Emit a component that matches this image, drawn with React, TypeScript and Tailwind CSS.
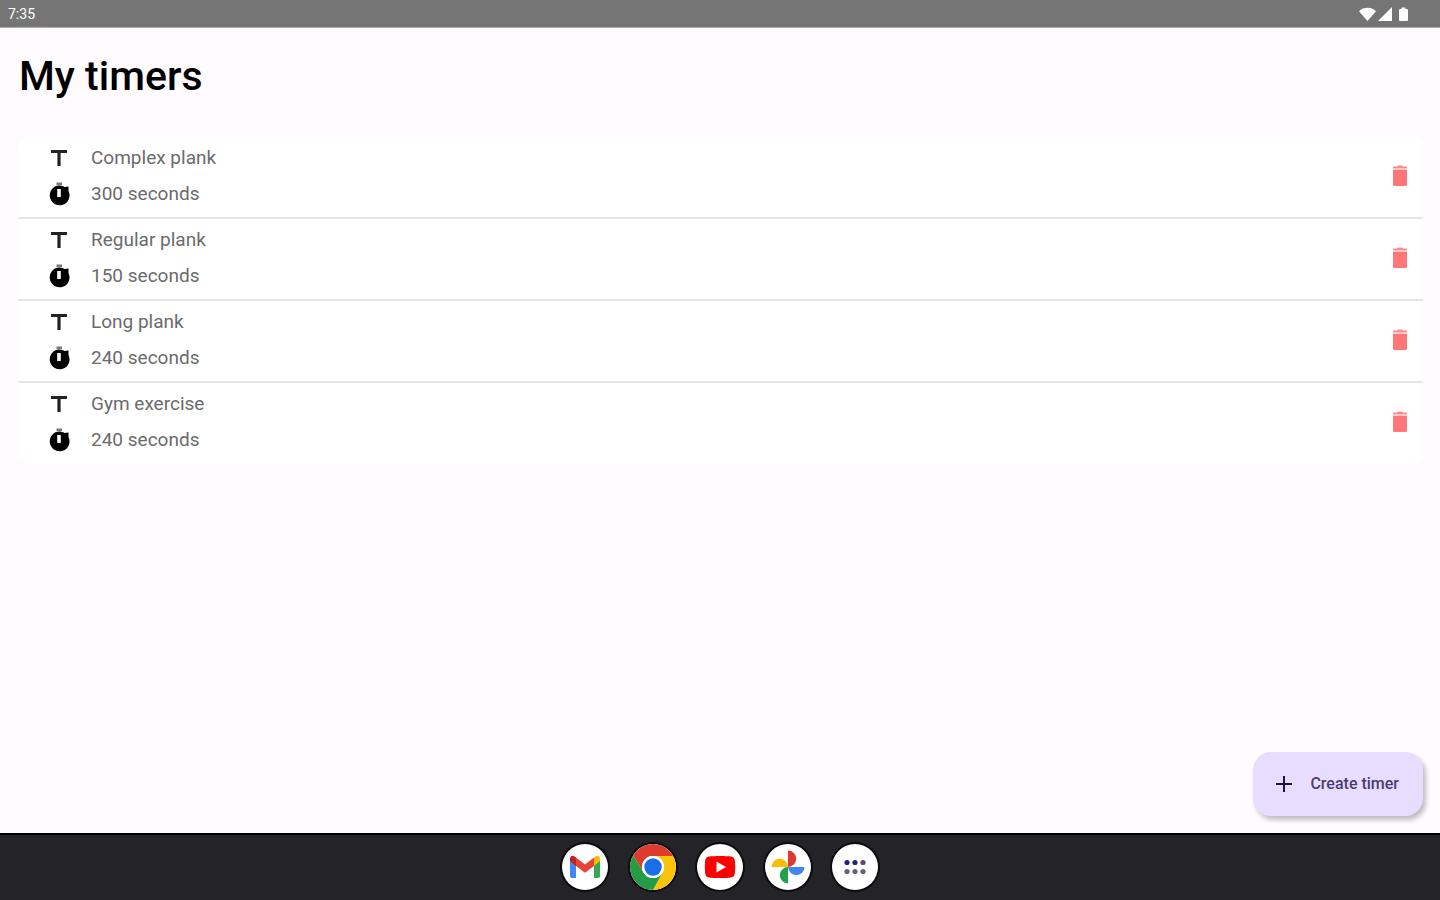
import React, { useState } from "react";

interface Timer {
  id: number;
  name: string;
  seconds: number;
}

const initialTimers: Timer[] = [
  { id: 1, name: "Complex plank", seconds: 300 },
  { id: 2, name: "Regular plank", seconds: 150 },
  { id: 3, name: "Long plank", seconds: 240 },
  { id: 4, name: "Gym exercise", seconds: 240 },
];

function TitleIcon() {
  return (
    <svg viewBox="0 0 24 24" className="size-6 shrink-0" aria-hidden="true">
      <path d="M4 4h16v3h-6.4v13h-3.2V7H4z" fill="#222" />
    </svg>
  );
}

function StopwatchIcon() {
  return (
    <svg viewBox="0 0 24 24" className="size-6 shrink-0" aria-hidden="true">
      <path d="M9.5 0.500h5.500v2.500H9.500z" fill="#777" />
      <path
        fillRule="evenodd"
        d="M12 3.500c2 0 3.900.5 5.500 1.500L21.500 4.500V9A9.900 9.900 0 1 1 12 3.500zM10.200 7v8h3.600V7z"
        fill="#000"
      />
    </svg>
  );
}

function TrashIcon() {
  return (
    <svg viewBox="0 0 16 22" className="h-[22px] w-4" aria-hidden="true">
      <path d="M1 1.500h4l1-1h4l1 1h4v2H1z" fill="#ff8a8a" />
      <path d="M1 3.500h14V5H1z" fill="#ffc9c9" />
      <path d="M1 5h14v14.500a1.500 1.500 0 0 1-1.500 1.500h-11A1.500 1.500 0 0 1 1 19.500z" fill="#ff7679" />
    </svg>
  );
}

function StatusBar() {
  return (
    <header className="flex h-7 items-center justify-between border-b border-[#b0afb0] bg-[#757575] pr-7 pl-2 text-white">
      <span className="text-sm leading-4">7:35</span>
      <svg viewBox="0 0 54 16" className="h-4 w-[54px]" fill="#fff" aria-hidden="true">
        <path d="M1 5.200C5.500 0.600 13.500 0.600 18 5.200L9.500 15z" />
        <path d="M34 1v14H20z" />
        <path d="M43.500 1.500h4V3h1.200c.7 0 1.300.6 1.300 1.300v9.400c0 .7-.6 1.300-1.300 1.300h-6.400c-.7 0-1.300-.6-1.300-1.300V4.300c0-.7.600-1.300 1.300-1.300h1.200z" />
      </svg>
    </header>
  );
}

function GmailIcon() {
  return (
    <svg viewBox="0 0 46 46" className="size-full" aria-hidden="true">
      <path d="M8 15.500l6 4.500v14h-4a2 2 0 0 1-2-2z" fill="#4285f4" />
      <path d="M32 20l6-4.500V32a2 2 0 0 1-2 2h-4z" fill="#34a853" />
      <path d="M32 13.500l1.500-1.100c2-1.400 4.500 0 4.500 2.400V17l-6 5z" fill="#fbbc04" />
      <path d="M14 13.500l-1.500-1.100C10.500 11 8 12.400 8 14.800V17l6 5z" fill="#c5221f" />
      <path d="M14 13.500l9 7 9-7V22l-9 6.800L14 22z" fill="#ea4335" />
    </svg>
  );
}

function ChromeIcon() {
  return (
    <svg viewBox="0 0 46 46" className="size-full" aria-hidden="true">
      <path d="M23 12h20.200A23 23 0 0 0 3.080 11.500L13.470 28.500A11 11 0 0 1 23 12z" fill="#dd3b2c" />
      <path d="M43.200 12H23a11 11 0 0 1 9.530 16.500L23 46A23 23 0 0 0 43.200 12z" fill="#fcc30b" />
      <path d="M3.080 11.500A23 23 0 0 0 23 46l9.530-17.500a11 11 0 0 1-19.060 0z" fill="#259b45" />
      <circle cx="23" cy="23" r="11" fill="#fff" />
      <circle cx="23" cy="23" r="8.700" fill="#1a6fe8" />
    </svg>
  );
}

function YoutubeIcon() {
  return (
    <svg viewBox="0 0 46 46" className="size-full" aria-hidden="true">
      <path
        d="M12 12.500c5-.8 17-.8 22 0 2.500.4 3.500 1.500 3.800 4 .5 4 .5 9 0 13-.3 2.500-1.300 3.600-3.800 4-5 .8-17 .8-22 0-2.500-.4-3.500-1.500-3.800-4-.5-4-.5-9 0-13 .3-2.500 1.300-3.600 3.800-4z"
        fill="#f00"
      />
      <path d="M19.500 17.500v11L29 23z" fill="#fff" />
    </svg>
  );
}

function PhotosIcon() {
  return (
    <svg viewBox="0 0 46 46" className="size-full" aria-hidden="true">
      <path d="M23 6.500a8.200 8.200 0 0 1 0 16.400z" fill="#df3a30" />
      <path d="M39.500 23a8.200 8.200 0 0 1-16.400 0z" fill="#4285f4" />
      <path d="M23 39.500a8.200 8.200 0 0 1 0-16.400z" fill="#1ea446" />
      <path d="M6.500 23a8.200 8.200 0 0 1 16.400 0z" fill="#fbbc04" />
    </svg>
  );
}

function AppsIcon() {
  return (
    <svg viewBox="0 0 46 46" className="size-full" aria-hidden="true">
      <g fill="#26217d">
        <circle cx="15" cy="18.500" r="2.600" />
        <circle cx="23" cy="18.500" r="2.600" />
        <circle cx="31" cy="18.500" r="2.600" fill="#65446f" />
      </g>
      <g fill="#62627a">
        <circle cx="15" cy="27.500" r="2.600" />
        <circle cx="23" cy="27.500" r="2.600" />
        <circle cx="31" cy="27.500" r="2.600" />
      </g>
    </svg>
  );
}

const apps = [
  { label: "Gmail", Icon: GmailIcon },
  { label: "Chrome", Icon: ChromeIcon },
  { label: "YouTube", Icon: YoutubeIcon },
  { label: "Photos", Icon: PhotosIcon },
  { label: "All apps", Icon: AppsIcon },
];

interface TimerRowProps {
  timer: Timer;
  onDelete: (id: number) => void;
}

function TimerRow({ timer, onDelete }: TimerRowProps) {
  return (
    <li className="flex items-center justify-between border-b-2 border-[#e6e6e6] pt-[9px] pr-[15px] pb-[11px] pl-[29px] last:border-b-0">
      <div className="space-y-3 text-[19px] leading-6 text-[#6b6b6b]">
        <div className="flex items-center gap-5">
          <TitleIcon />
          <span>{timer.name}</span>
        </div>
        <div className="flex items-center gap-5">
          <StopwatchIcon />
          <span>{timer.seconds} seconds</span>
        </div>
      </div>
      <button
        type="button"
        aria-label={`Delete ${timer.name}`}
        onClick={() => onDelete(timer.id)}
      >
        <TrashIcon />
      </button>
    </li>
  );
}

export default function App() {
  const [timers, setTimers] = useState(initialTimers);

  const handleDelete = (id: number) => {
    setTimers(timers.filter((timer) => timer.id !== id));
  };

  return (
    <div className="flex min-h-screen flex-col bg-[#fffbff] font-[Roboto,sans-serif]">
      <StatusBar />

      <main className="flex flex-1 flex-col pr-[17px] pb-[17px] pl-[18px]">
        <h1 className="mt-6 pl-px text-[41px] leading-12 font-medium text-black">
          My timers
        </h1>

        <ul className="mt-[37px] rounded-xl bg-white">
          {timers.map((timer) => (
            <TimerRow key={timer.id} timer={timer} onDelete={handleDelete} />
          ))}
        </ul>

        <button
          type="button"
          className="mt-auto flex h-16 items-center gap-4 self-end rounded-[18px] bg-[#e8ddff] pr-6 pl-[21px] text-base font-medium text-[#4a3d70] shadow-[3px_4px_5px_rgba(0,0,0,0.25)]"
        >
          <svg viewBox="0 0 20 20" className="size-5" aria-hidden="true">
            <path d="M10 2v16M2 10h16" stroke="#21104d" strokeWidth="2" />
          </svg>
          Create timer
        </button>
      </main>

      <nav
        aria-label="Apps"
        className="flex h-[67px] items-center justify-center border-t-2 border-black bg-[#242428] pb-[2px]"
      >
        <div className="flex w-[316px] justify-between">
          {apps.map(({ label, Icon }) => (
            <button
              key={label}
              type="button"
              aria-label={label}
              className="size-[46px] overflow-hidden rounded-full bg-white ring-2 ring-[#0c0c0e]"
            >
              <Icon />
            </button>
          ))}
        </div>
      </nav>
    </div>
  );
}
